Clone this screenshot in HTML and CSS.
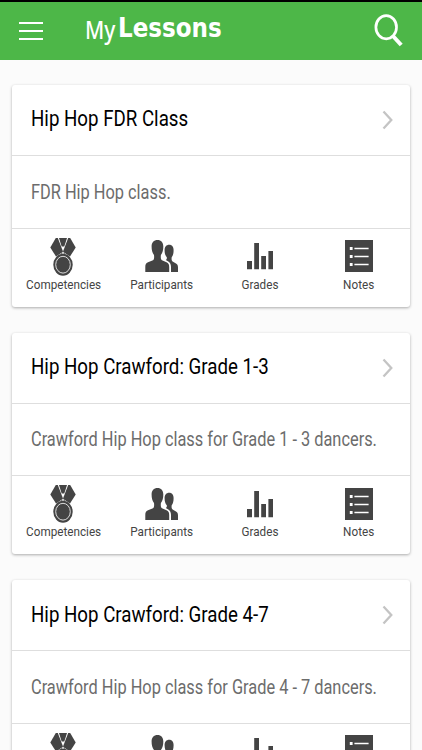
FILE: index.html
```html
<!DOCTYPE html>
<html lang="en">
<head>
<meta charset="utf-8">
<meta name="viewport" content="width=device-width, initial-scale=1">
<title>My Lessons</title>
<link rel="stylesheet" href="styles.css">
</head>
<body>

<!-- Icons -->
<svg class="icon-defs" width="0" height="0">
    <symbol id="icon-medal" viewBox="0 0 26 38">
        <path d="M5.800 0H7.800L13 13.500L10.500 15.500L6 18.500L.3 9.500Z"/>
        <path d="M18.200 0H20.200L25.700 9.500L20 18.500L15.500 15.500L13 13.500Z"/>
        <path d="M9 0H17L14.300 8.500H11.700Z"/>
        <circle cx="13" cy="15" r="1.500" fill="#fff" stroke="#444" stroke-width=".8"/>
        <ellipse cx="13" cy="26.700" rx="9.700" ry="11"/>
        <ellipse cx="13" cy="26.700" rx="7.300" ry="8.400" fill="none" stroke="#ddd" stroke-width="1"/>
    </symbol>
    <symbol id="icon-people" viewBox="0 0 34 32">
        <path d="M12.500 0C16.200 0 18.300 2.500 18.300 6.500C18.300 10 17.600 13 15.900 15C15.600 17.500 15.800 19.600 17 20.200L21.500 22.300C23.500 23.300 24.200 24.500 24.200 27V32H.3V27C.3 24.500 1 23.300 3 22.300L8 20.200C9.200 19.600 9.300 17.500 9 15C7.300 13 6.600 10 6.600 6.500C6.600 2.500 8.800 0 12.500 0Z"/>
        <path d="M24.200 4.800C27 4.800 28.600 7 28.600 10.300C28.600 13.300 28 15.700 26.700 17.300C26.400 19.500 26.600 21 28 21.700L31 23.500C32.500 24.400 33 25.500 33 27.500V32H26V27C26 23.700 24.800 22 22.500 20.900L20.800 20C21.800 19.500 22 18.500 21.800 17.300C20.300 15.700 19.600 13.300 19.600 10.300C19.600 7 21.300 4.800 24.200 4.800Z"/>
    </symbol>
    <symbol id="icon-bars" viewBox="0 0 26 32">
        <path d="M0 21H5V29.300H0ZM7.200 3H12V29.300H7.200ZM14.200 16H19V29.300H14.200ZM21.400 11H26V29.300H21.400Z"/>
    </symbol>
    <symbol id="icon-notes" viewBox="0 0 28 32">
        <path d="M0 0H28V32H0Z"/>
        <path d="M4.800 7H7.600V10H4.800ZM9.400 7.700H23.600V9.200H9.400ZM4.800 15H7.600V18H4.800ZM9.400 15.700H23.600V17.200H9.400ZM4.800 23H7.600V26H4.800ZM9.400 23.700H23.600V25.200H9.400Z" fill="#fff"/>
    </symbol>
    <symbol id="icon-chevron" viewBox="0 0 12 20">
        <path d="M1.500 1.500L9.300 10L1.500 18.500" fill="none" stroke="#c4c4c4" stroke-width="2.300"/>
    </symbol>
</svg>

<header class="topbar">
    <button class="menu-btn" aria-label="Menu">
        <span></span>
        <span></span>
        <span></span>
    </button>
    <h1 class="brand"><span class="brand-my">My</span><span class="brand-name">Lessons</span></h1>
    <button class="search-btn" aria-label="Search">
        <svg width="30" height="34" viewBox="0 0 30 34">
            <ellipse cx="12.200" cy="13.200" rx="10.300" ry="11.600" fill="none" stroke="#fff" stroke-width="2.700"/>
            <path d="M18.500 21.500L27.200 31" fill="none" stroke="#fff" stroke-width="4"/>
        </svg>
    </button>
</header>

<main class="lessons">
    <section class="card">
        <a class="card-title" href="#">
            <span class="title-text">Hip Hop FDR Class</span>
            <svg class="chevron"><use href="#icon-chevron"/></svg>
        </a>
        <div class="card-desc"><span class="desc-text">FDR Hip Hop class.</span></div>
        <nav class="card-actions">
            <a href="#"><svg class="medal"><use href="#icon-medal"/></svg><span>Competencies</span></a>
            <a href="#"><svg class="people"><use href="#icon-people"/></svg><span>Participants</span></a>
            <a href="#"><svg class="bars"><use href="#icon-bars"/></svg><span>Grades</span></a>
            <a href="#"><svg class="notes"><use href="#icon-notes"/></svg><span>Notes</span></a>
        </nav>
    </section>

    <section class="card">
        <a class="card-title" href="#">
            <span class="title-text">Hip Hop Crawford: Grade 1-3</span>
            <svg class="chevron"><use href="#icon-chevron"/></svg>
        </a>
        <div class="card-desc"><span class="desc-text">Crawford Hip Hop class for Grade 1 - 3 dancers.</span></div>
        <nav class="card-actions">
            <a href="#"><svg class="medal"><use href="#icon-medal"/></svg><span>Competencies</span></a>
            <a href="#"><svg class="people"><use href="#icon-people"/></svg><span>Participants</span></a>
            <a href="#"><svg class="bars"><use href="#icon-bars"/></svg><span>Grades</span></a>
            <a href="#"><svg class="notes"><use href="#icon-notes"/></svg><span>Notes</span></a>
        </nav>
    </section>

    <section class="card">
        <a class="card-title" href="#">
            <span class="title-text">Hip Hop Crawford: Grade 4-7</span>
            <svg class="chevron"><use href="#icon-chevron"/></svg>
        </a>
        <div class="card-desc"><span class="desc-text">Crawford Hip Hop class for Grade 4 - 7 dancers.</span></div>
        <nav class="card-actions">
            <a href="#"><svg class="medal"><use href="#icon-medal"/></svg><span>Competencies</span></a>
            <a href="#"><svg class="people"><use href="#icon-people"/></svg><span>Participants</span></a>
            <a href="#"><svg class="bars"><use href="#icon-bars"/></svg><span>Grades</span></a>
            <a href="#"><svg class="notes"><use href="#icon-notes"/></svg><span>Notes</span></a>
        </nav>
    </section>
</main>

</body>
</html>
```
FILE: styles.css
```css
* {
    box-sizing: border-box;
    margin: 0;
    padding: 0;
}

body {
    height: 100vh;
    overflow: hidden;
    background: #fbfbfb;
    font-family: Roboto, sans-serif;
    color: #000;
}

a {
    color: inherit;
    text-decoration: none;
}

button {
    border: none;
    background: none;
    cursor: pointer;
}

.icon-defs {
    display: block;
}

/* Top bar */
.topbar {
    display: flex;
    align-items: center;
    height: 60px;
    padding: 0 18px 0 19px;
    border-top: 2px solid #000;
    background: #4db748;
    color: #fff;
}

.menu-btn {
    display: flex;
    flex-direction: column;
    gap: 5.500px;
    width: 24px;
}

.menu-btn span {
    height: 2.500px;
    background: #fff;
}

.brand {
    display: flex;
    align-items: baseline;
    flex-grow: 1;
    margin-left: 42px;
    padding-bottom: 5px;
    line-height: 34px;
    white-space: nowrap;
}

.brand span {
    transform-origin: 0 50%;
}

.brand-my {
    width: 32px;
    font-family: "Noto Sans", sans-serif;
    font-size: 25px;
    font-weight: 500;
    transform: translateY(1px) scaleX(0.84);
}

.brand-name {
    font-family: "DejaVu Sans Condensed", "DejaVu Sans", sans-serif;
    font-size: 26px;
    font-stretch: condensed;
    font-weight: 700;
    transform: translate(1px, -1px) scaleX(0.985);
}

.search-btn {
    width: 30px;
    height: 34px;
}

/* Lesson cards */
.lessons {
    display: flex;
    flex-direction: column;
    gap: 26.2px;
    padding: 25px 12px 0;
}

.card {
    flex: none;
    height: 221.500px;
    border-radius: 3px;
    background: #fff;
    box-shadow: 0 1px 3px rgba(0, 0, 0, 0.32);
}

.card-title,
.card-desc {
    display: flex;
    align-items: center;
    padding-left: 19px;
    border-bottom: 1.500px solid #dedede;
    white-space: nowrap;
}

.card-title {
    justify-content: space-between;
    height: 71px;
    padding-right: 16px;
    font-size: 22px;
}

.card-desc {
    height: 72.500px;
    font-size: 19.500px;
    color: #6c6c6c;
}

.title-text,
.desc-text {
    transform-origin: 0 50%;
}

.title-text {
    padding-bottom: 2.500px;
    transform: scaleX(0.85);
}

.desc-text {
    padding-top: 1px;
    transform: scaleX(0.839);
}

.chevron {
    flex: none;
    width: 12px;
    height: 20px;
}

.card-actions {
    display: grid;
    grid-template-columns: repeat(4, 1fr);
    padding: 9px 2px 0;
    font-size: 13.300px;
    color: #444;
    fill: #444;
}

.card-actions a {
    display: flex;
    flex-direction: column;
    align-items: center;
    justify-content: space-between;
    height: 55px;
}

.card-actions span {
    line-height: 16px;
    transform: scaleX(0.88);
}

.card-actions svg {
    height: 32px;
    margin-top: 2.500px;
}

.card-actions .medal {
    width: 26px;
    height: 38px;
    margin-top: 0;
}

.people {
    width: 34px;
}

.bars {
    width: 26px;
}

.notes {
    width: 28px;
}
```
